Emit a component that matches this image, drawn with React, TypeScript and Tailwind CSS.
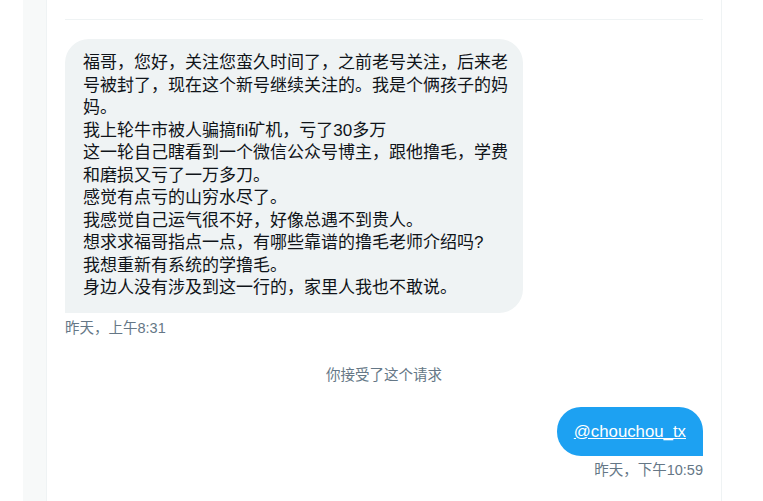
const lines = [
  '福哥，您好，关注您蛮久时间了，之前老号关注，后来老号被封了，现在这个新号继续关注的。我是个俩孩子的妈妈。',
  '我上轮牛市被人骗搞fil矿机，亏了30多万',
  '这一轮自己瞎看到一个微信公众号博主，跟他撸毛，学费和磨损又亏了一万多刀。',
  '感觉有点亏的山穷水尽了。',
  '我感觉自己运气很不好，好像总遇不到贵人。',
  '想求求福哥指点一点，有哪些靠谱的撸毛老师介绍吗?',
  '我想重新有系统的学撸毛。',
  '身边人没有涉及到这一行的，家里人我也不敢说。',
]

const font = { fontFamily: '"Liberation Sans", "Noto Sans CJK SC", sans-serif' }

export default function App() {
  return (
    <div className="flex h-[501px] w-full overflow-hidden bg-white" style={font}>
      <div className="w-[23px] shrink-0" />
      <div className="w-[24px] shrink-0 border-r border-[#eff3f4] bg-[#f7f9f9]" />

      <main className="w-[675px] shrink-0 border-r border-[#eff3f4] px-[18px]">
        <div className="h-[20px] border-b border-[#eff3f4]" />

        <div className="mt-[19px] flex flex-col items-start">
          <div className="w-[458px] rounded-[24px] rounded-bl-none bg-[#eff3f4] pl-[18px] pr-[10px] pt-[13px] pb-[13px] text-[17px] leading-[22.5px] text-[#0f1419]">
            {lines.map((l, i) => (
              <p key={i}>{l}</p>
            ))}
          </div>
          <span className="mt-[6px] text-[14.5px] leading-[18px] text-[#657786]">昨天，上午8:31</span>
        </div>

        <div className="mt-[29px] text-center text-[14.5px] leading-[18px] text-[#657786]">
          你接受了这个请求
        </div>

        <div className="mt-[23px] flex flex-col items-end">
          <div className="rounded-[24px] rounded-br-none bg-[#1da1f2] px-[17px] py-[13px] text-[16.8px] leading-[23px] text-white">
            <a className="underline">@chouchou_tx</a>
          </div>
          <span className="mt-[5px] text-[14.5px] leading-[18px] text-[#657786]">昨天，下午10:59</span>
        </div>
      </main>

      <div className="flex-1" />
    </div>
  )
}
